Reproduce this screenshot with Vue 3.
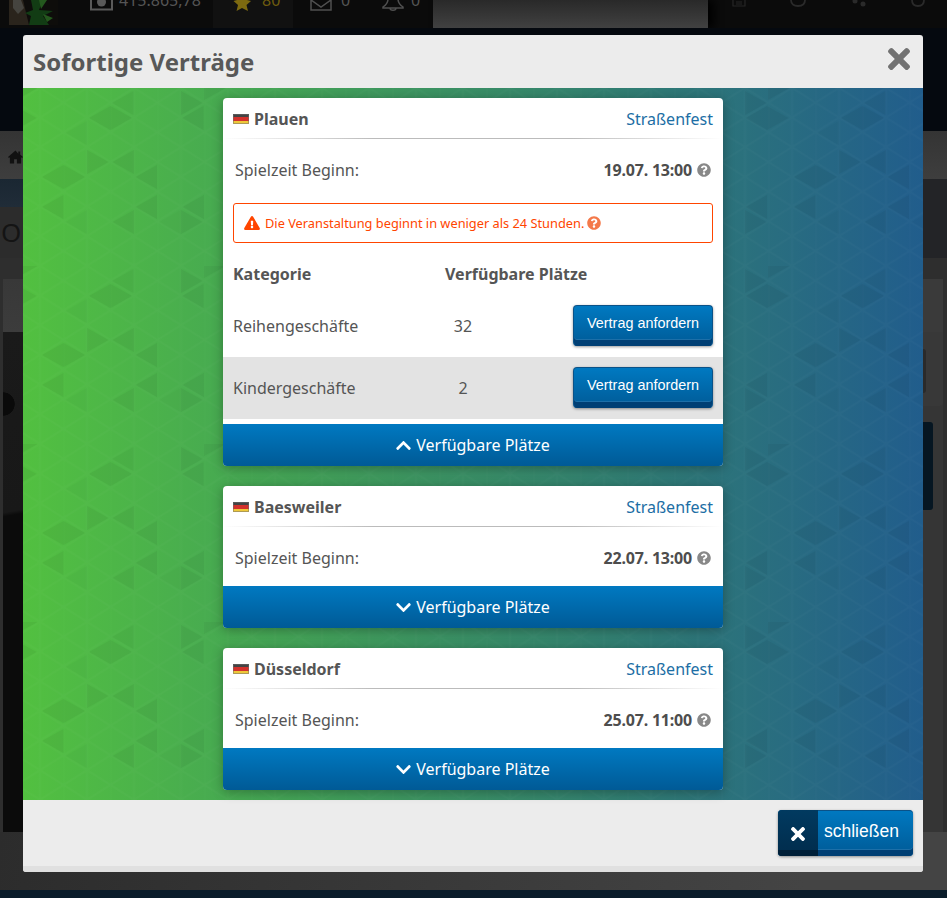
<script setup>
const cards = [
  { city: 'Plauen', date: '19.07. 13:00', open: true },
  { city: 'Baesweiler', date: '22.07. 13:00', open: false },
  { city: 'Düsseldorf', date: '25.07. 11:00', open: false }
]
const rows = [
  { name: 'Reihengeschäfte', free: 32 },
  { name: 'Kindergeschäfte', free: 2 }
]
const q = 'M504 256c0 136.997-111.043 248-248 248S8 392.997 8 256C8 119.083 119.043 8 256 8s248 111.083 248 248zM262.655 90c-54.497 0-89.255 22.957-116.549 63.758-3.536 5.286-2.353 12.415 2.715 16.258l34.699 26.31c5.205 3.947 12.621 3.008 16.665-2.122 17.864-22.658 30.113-35.797 57.303-35.797 20.429 0 45.698 13.148 45.698 32.958 0 14.976-12.363 22.667-32.534 33.976C247.128 238.528 216 254.941 216 296v4c0 6.627 5.373 12 12 12h56c6.627 0 12-5.373 12-12v-1.333c0-28.462 83.186-29.647 83.186-106.667 0-58.002-60.165-102-116.531-102zM256 338c-25.365 0-46 20.635-46 46 0 25.364 20.635 46 46 46s46-20.636 46-46c0-25.365-20.635-46-46-46z'
const times = 'M242.72 256l100.07-100.07c12.28-12.28 12.28-32.19 0-44.48l-22.24-22.24c-12.28-12.28-32.19-12.28-44.48 0L176 189.28 75.93 89.21c-12.28-12.28-32.19-12.28-44.48 0L9.21 111.45c-12.28 12.28-12.28 32.19 0 44.48L109.28 256 9.21 356.07c-12.28 12.28-12.28 32.19 0 44.48l22.24 22.24c12.28 12.28 32.2 12.28 44.48 0L176 322.72l100.07 100.07c12.28 12.28 32.2 12.28 44.48 0l22.24-22.24c12.28-12.28 12.28-32.19 0-44.48L242.72 256z'
const down = 'M207.029 381.476L12.686 187.132c-9.373-9.373-9.373-24.569 0-33.941l22.667-22.667c9.357-9.357 24.522-9.375 33.901-.04L224 284.505l154.745-154.021c9.379-9.335 24.544-9.317 33.901.04l22.667 22.667c9.373 9.373 9.373 24.569 0 33.941L240.971 381.476c-9.373 9.372-24.569 9.372-33.942 0z'
const up = 'M240.971 130.524l194.343 194.343c9.373 9.373 9.373 24.569 0 33.941l-22.667 22.667c-9.357 9.357-24.522 9.375-33.901.04L224 227.495 69.255 381.516c-9.379 9.335-24.544 9.317-33.901-.04l-22.667-22.667c-9.373-9.373-9.373-24.569 0-33.941L207.03 130.525c9.372-9.373 24.568-9.373 33.941-.001z'
const warn = 'M569.517 440.013C587.975 472.007 564.806 512 527.94 512H48.054c-36.937 0-59.999-40.055-41.577-71.987L246.423 23.985c18.467-32.009 64.72-31.951 83.154 0l239.94 416.028zM288 354c-25.405 0-46 20.595-46 46s20.595 46 46 46 46-20.595 46-46-20.595-46-46-46zm-43.673-165.346l7.418 136c.347 6.364 5.609 11.346 11.982 11.346h48.546c6.373 0 11.635-4.982 11.982-11.346l7.418-136c.375-6.874-5.098-12.654-11.982-12.654h-63.383c-6.884 0-12.356 5.78-11.981 12.654z'

// Darker triangles of the body's background: [edge x, centre y, direction, strength], in page pixels.
const marks = [
  [110.5, 118, -1, 1], [110.5, 118, 1, 1], [203.5, 118, -1, 1], [133.5, 103, -1, .8], [181, 103, 1, 1],
  [87, 133, -1, .5], [87, 162, 1, 1], [134, 162, -1, 1], [63.5, 177, -1, 1], [63.5, 177, 1, 1],
  [157, 177, -1, 1], [63.5, 207, -1, 1], [157, 207, -1, 1], [204, 207, -1, 1], [134, 222, -1, 1],
  [181, 222, -1, .5], [181, 222, 1, 1], [87, 222, -1, .5], [16, 266, 1, 1], [204, 266, 1, 1],
  [15, 118, -1, 1], [15, 118, 1, 1], [15, 207, -1, 1], [-7, 222, 1, 1], [-7, 103, 1, 1]
]
const triangles = []
for (const [x, y, dir, strength] of marks) {
  const lx = (x - 23 + 752) % 752
  const ly = (y - 88 + 178) % 178
  for (const sx of [0, -752]) {
    for (const sy of [0, -178]) {
      const ex = lx + sx
      const cy = ly + sy
      triangles.push({
        points: `${ex},${cy - 12} ${ex},${cy + 12} ${ex + dir * 21.5},${cy}`,
        opacity: 0.042 * strength
      })
    }
  }
}
</script>

<template>
  <div class="page">
    <header class="topbar">
      <svg class="avatar" viewBox="0 0 49 25" width="49" height="25">
        <rect width="49" height="25" fill="#0e0d0b" />
        <path d="M0 0h14l6 25H0z" fill="#2a241c" />
        <path d="M4 0l8 0 3 8-6 6-5-6z" fill="#45443f" />
        <path d="M22 0h12l-4 10 14 1-10 5 6 9H20l2-9-6-3 8-3z" fill="#123c14" />
        <path d="M30 0h8l-6 9zM34 14l10 4-6 4z" fill="#24581e" />
      </svg>
      <div class="stat money">
        <svg class="ico-money" viewBox="0 0 23 11" width="23" height="11">
          <path d="M1 0v9.500h21V0" fill="none" stroke="#5a5a5a" stroke-width="2" />
          <circle cx="11.500" cy="2" r="4.500" fill="#5a5a5a" />
        </svg>
        <span>415.865,78</span>
      </div>
      <div class="stat stars">
        <svg viewBox="0 0 18 11" width="18" height="11"><path d="M5 -6h8l1 6 4 1-4.500 4 1.500 6L9 8l-5.500 3L5 5 .5 1 4 0z" fill="#7d6a10" /></svg>
        <span>80</span>
      </div>
      <div class="stat mail">
        <svg viewBox="0 0 22 11" width="22" height="11"><path d="M1 0v10h20V0M1 0l10 7 10-7" fill="none" stroke="#505050" stroke-width="1.500" /></svg>
        <span>0</span>
      </div>
      <div class="stat bell">
        <svg viewBox="0 0 22 12" width="22" height="12"><path d="M6 0c0 4-2 6-5 8v1h20V8c-3-2-5-4-5-8M8 9c0 3 6 3 6 0" fill="none" stroke="#505050" stroke-width="1.500" /></svg>
        <span>0</span>
      </div>
      <div class="center-tab"></div>
      <div class="dim-icons">
        <svg viewBox="0 0 14 7" width="14" height="7"><path d="M1 0v6h12V0M4 2h6M4 4h6" fill="none" stroke="#262626" stroke-width="1.200" /></svg>
        <svg viewBox="0 0 16 7" width="16" height="7"><path d="M1 0c0 4 3 6 7 6s7-2 7-6" fill="none" stroke="#2a2a2a" stroke-width="1.800" /></svg>
        <svg viewBox="0 0 16 7" width="16" height="7"><circle cx="4" cy="1" r="2.500" fill="#2a2a2a" /><circle cx="12" cy="4" r="2.500" fill="#2a2a2a" /></svg>
        <svg viewBox="0 0 14 7" width="14" height="7"><path d="M1 0c0 4 2 6 6 6s6-2 6-6" fill="none" stroke="#2a2a2a" stroke-width="1.800" /></svg>
      </div>
    </header>
    <div class="nav-gap"></div>
    <nav class="subnav">
      <svg viewBox="0 0 16 14" width="15" height="14"><path d="M8 0L0 7l1 1 1-.8V14h4.500V9.500h3V14H14V7.200l1 .8 1-1-3-2.600V1h-2v2.600z" fill="#111" /></svg>
    </nav>
    <section class="title-band">
      <div class="title-left">
        <div class="crumb"></div>
        <div class="headline">O</div>
      </div>
      <div class="title-right"></div>
    </section>
    <section class="content">
      <div class="hero">
        <div class="hero-head"></div>
        <div class="hero-img"></div>
      </div>
      <div class="side">
        <div class="side-head"></div>
        <div class="side-box"><i></i></div>
        <div class="side-cta"></div>
      </div>
    </section>
    <div class="page-foot"></div>

    <div class="modal">
      <div class="modal-head">
        <h2>Sofortige Verträge</h2>
        <svg class="close-x" viewBox="0 80 352 352" preserveAspectRatio="none" width="22" height="22"><path :d="times" /></svg>
      </div>
      <div class="modal-body">
        <svg class="pattern" width="900" height="712">
          <defs>
            <pattern id="lattice" patternUnits="userSpaceOnUse" x="-6.500" y="-44.670" width="47" height="59.330">
              <path d="M0 0V59.330M23.500 0V59.330M0 0L47 29.670M0 29.670L47 59.330M0 29.670L47 0M0 59.330L47 29.670" fill="none" stroke="#fff" stroke-opacity=".02" stroke-width="1.500" />
            </pattern>
            <pattern id="marks" patternUnits="userSpaceOnUse" x="0" y="0" width="752" height="178">
              <polygon v-for="(t, i) in triangles" :key="i" :points="t.points" fill="#000" :fill-opacity="t.opacity" />
            </pattern>
          </defs>
          <rect width="900" height="712" fill="url(#lattice)" />
          <rect width="900" height="712" fill="url(#marks)" />
        </svg>
        <article v-for="card in cards" :key="card.city" class="card">
          <div class="card-head">
            <span class="city">
              <span class="flag"></span>{{ card.city }}
            </span>
            <span class="kind">Straßenfest</span>
          </div>
          <div class="rule"></div>
          <div class="start">
            <span>Spielzeit Beginn:</span>
            <span class="date">
              <b>{{ card.date }}</b>
              <svg viewBox="0 0 512 512" width="14" height="14"><path :d="q" fill="#888" /></svg>
            </span>
          </div>
          <template v-if="card.open">
            <div class="alert">
              <svg viewBox="0 0 576 512" width="16" height="14"><path :d="warn" fill="#ff4500" /></svg>
              <span>Die Veranstaltung beginnt in weniger als 24 Stunden.</span>
              <svg viewBox="0 0 512 512" width="14" height="14"><path :d="q" fill="#f4794a" /></svg>
            </div>
            <div class="table-head">
              <b>Kategorie</b>
              <b>Verfügbare Plätze</b>
            </div>
            <div v-for="row in rows" :key="row.name" class="slot">
              <span>{{ row.name }}</span>
              <span class="free">{{ row.free }}</span>
              <button class="request" type="button">Vertrag anfordern</button>
            </div>
            <div class="slot-end"></div>
          </template>
          <div class="card-foot">
            <svg viewBox="0 0 448 512" width="15" height="17"><path :d="card.open ? up : down" fill="#fff" /></svg>
            <span>Verfügbare Plätze</span>
          </div>
        </article>
      </div>
      <div class="modal-foot">
        <button class="dismiss" type="button">
          <span class="dismiss-ico">
            <svg viewBox="0 80 352 352" width="14" height="14"><path :d="times" fill="#fff" /></svg>
          </span>
          <span class="dismiss-text">schließen</span>
        </button>
      </div>
    </div>
  </div>
</template>

<style scoped>
.page {
  position: relative;
  width: 947px;
  height: 898px;
  overflow: hidden;
  background: #2d2d2d;
  font-family: "Noto Sans", "Open Sans", sans-serif;
  color: #555;
  font-size: 16px;
}
.topbar {
  height: 28px;
  background: #0b0b0b;
  display: flex;
  align-items: flex-start;
  overflow: hidden;
}
.avatar { margin-left: 9px; flex: none; }
.stat {
  display: flex;
  align-items: flex-end;
  height: 28px;
  padding-bottom: 17px;
  box-sizing: border-box;
  color: #555;
  font-size: 16px;
  line-height: 20px;
  flex: none;
}
.stat svg { flex: none; }
.stat span { margin-bottom: 1px; }
.money { margin-left: 32px; gap: 6px; width: 123px; }
.stars {
  width: 80px;
  background: #111;
  color: #6f5d0e;
  gap: 11px;
  padding-left: 20px;
}
.mail { margin-left: 17px; gap: 9px; width: 72px; }
.bell { gap: 7px; width: 51px; }
.center-tab {
  width: 275px;
  height: 28px;
  flex: none;
  background: linear-gradient(#292929, #414141);
  box-shadow: 6px 0 10px #000;
}
.dim-icons {
  flex: 1;
  display: flex;
  padding: 0 22px 0 24px;
  justify-content: space-between;
}
.nav-gap { height: 103px; background: #05090f; }
.subnav {
  height: 48px;
  background: linear-gradient(#343434, #3e3e3e);
  padding: 16px 0 0 8px;
  box-sizing: border-box;
}
.title-band { display: flex; height: 79px; }
.title-left { flex: 1; }
.crumb { height: 28px; background: linear-gradient(#1a2732, #202c38); }
.headline {
  height: 51px;
  background: #2c2c2c;
  color: #141414;
  font-size: 26px;
  line-height: 50px;
  padding-left: 1px;
}
.title-right { flex: 1; background: #232427; }
.content {
  height: 574px;
  padding: 21px 4px 0 3px;
  box-sizing: border-box;
  display: flex;
  justify-content: space-between;
  background: #2e2e2e;
}
.hero { width: 300px; display: flex; flex-direction: column; }
.hero-head { height: 53px; background: linear-gradient(#383838, #3c3c3c); }
.hero-img {
  flex: 1;
  background:
    radial-gradient(circle 12px at 0 72px, #0a0a0a 95%, transparent),
    linear-gradient(170deg, #1a1a1a 0, #181818 178px, #0b0b0b 182px, #0b0b0b);
}
.side { width: 300px; display: flex; flex-direction: column; background: #353535; }
.side-head { height: 53px; background: #3a3a3a; }
.side-box {
  height: 74px;
  background: #383838;
  border-radius: 0 0 3px 3px;
  display: flex;
  justify-content: flex-end;
  padding: 17px 17px 13px 0;
  box-sizing: border-box;
}
.side-box i { display: block; width: 300px; background: #2a2a2a; border-radius: 3px; }
.side-cta {
  height: 88px;
  margin: 16px 10px 0 0;
  background: #061622;
  border-radius: 3px;
}
.page-foot {
  height: 66px;
  background: linear-gradient(100deg, #2c2c2c, #444 85%);
  border-bottom: 8px solid #0a1c2a;
  box-sizing: border-box;
}
.modal {
  position: absolute;
  left: 23px;
  top: 35px;
  width: 900px;
  height: 837px;
  display: flex;
  flex-direction: column;
  background: #ececec;
  border-radius: 3px;
  overflow: hidden;
}
.modal-head {
  height: 53px;
  flex: none;
  display: flex;
  align-items: center;
  justify-content: space-between;
  padding: 0 13px 0 10px;
  box-sizing: border-box;
}
.modal-head h2 {
  margin: 0;
  font-family: "Noto Sans", "Open Sans", sans-serif;
  font-size: 24px;
  font-weight: 700;
  line-height: 54px;
  color: #585858;
}
.close-x { fill: #727272; margin-top: -5px; }
.modal-body {
  position: relative;
  height: 712px;
  flex: none;
  padding-top: 10px;
  box-sizing: border-box;
  background: linear-gradient(to right, #52c040, #215d8c);
}
.pattern { position: absolute; left: 0; top: 0; }
.card {
  position: relative;
  width: 500px;
  margin: 0 auto 20px;
  background: #fff;
  border-radius: 4px;
  box-shadow: 0 2px 12px rgba(0, 0, 0, 0.3);
  overflow: hidden;
}
.card-head {
  height: 40px;
  padding: 1px 10px 0;
  box-sizing: border-box;
  display: flex;
  align-items: center;
  justify-content: space-between;
}
.city { font-weight: 700; display: flex; align-items: center; color: #555; }
.flag {
  width: 16px;
  height: 10px;
  margin-right: 5px;
  background: linear-gradient(#444 0 33%, #d3312c 33% 67%, #eec83a 67%);
  box-shadow: inset 0 0 0 1px rgba(110, 110, 110, 0.5);
}
.kind { color: #1c6ea4; }
.rule {
  height: 1px;
  background: linear-gradient(to right, transparent, #bbb 30%, #bbb 70%, transparent);
}
.start {
  height: 59px;
  padding: 3px 12px 0;
  box-sizing: border-box;
  display: flex;
  align-items: center;
  justify-content: space-between;
}
.date { display: flex; align-items: center; gap: 5px; }
.date b { font-weight: 700; color: #4d4d4d; letter-spacing: -0.2px; }
.alert {
  height: 40px;
  margin: 5px 10px 0;
  padding: 0 10px;
  box-sizing: border-box;
  border: 1px solid #ff4500;
  border-radius: 3px;
  display: flex;
  align-items: center;
  color: #ff4500;
  font-size: 12.800px;
}
.alert span { margin: 0 3px 0 5px; }
.table-head {
  height: 52px;
  padding: 10px 10px 0;
  box-sizing: border-box;
  display: grid;
  grid-template-columns: 212px 1fr;
  align-items: center;
}
.slot {
  height: 62px;
  padding: 0 10px;
  box-sizing: border-box;
  display: grid;
  grid-template-columns: 213px 34px 1fr;
  align-items: center;
}
.slot + .slot { background: #e3e3e3; }
.free { text-align: center; }
.request {
  justify-self: end;
  width: 140px;
  height: 41px;
  padding: 0 0 6px;
  border: 1px solid #0a5288;
  border-bottom: 0;
  border-radius: 4px;
  background: linear-gradient(#0079c1, #005a96);
  box-shadow: inset 0 -6px 0 #003f74, inset 0 -7px 0 #1d6fa8, 0 1px 3px rgba(0, 0, 0, 0.4);
  color: #fff;
  font-family: "Liberation Sans", Arial, sans-serif;
  font-size: 14.400px;
  margin-top: -1px;
}
.slot-end { height: 5px; }
.card-foot {
  height: 42px;
  display: flex;
  align-items: center;
  justify-content: center;
  gap: 5px;
  background: linear-gradient(#0079c1, #005a96);
  color: #fff;
}
.modal-foot {
  flex: 1;
  display: flex;
  justify-content: flex-end;
  align-items: flex-start;
  padding: 10px 10px 0 0;
  box-sizing: border-box;
  border-top: 1px solid #e6e6e6;
  box-shadow: inset 0 -6px 0 #e0e0e0;
  margin-top: -1px;
}
.dismiss {
  width: 135px;
  height: 46px;
  padding: 0;
  border: 0;
  border-radius: 4px;
  overflow: hidden;
  display: flex;
  background: linear-gradient(#0079c1, #005a96);
  box-shadow: inset 0 1px 0 #0a5288, inset 0 -6px 0 #003f74, inset 0 -7px 0 #1d6fa8, 0 1px 3px rgba(0, 0, 0, 0.4);
  color: #fff;
  font-family: "Liberation Sans", Arial, sans-serif;
  font-size: 17.500px;
}
.dismiss-ico {
  width: 40px;
  height: 46px;
  flex: none;
  display: flex;
  align-items: center;
  justify-content: center;
  padding-top: 2px;
  box-sizing: border-box;
  background: linear-gradient(#013a60, #012c4c);
  box-shadow: inset 0 -6px 0 #001f38;
}
.dismiss-text { padding: 11px 0 0 6px; line-height: 20px; }
</style>

<style>
html, body { margin: 0; background: #2d2d2d; }
</style>
